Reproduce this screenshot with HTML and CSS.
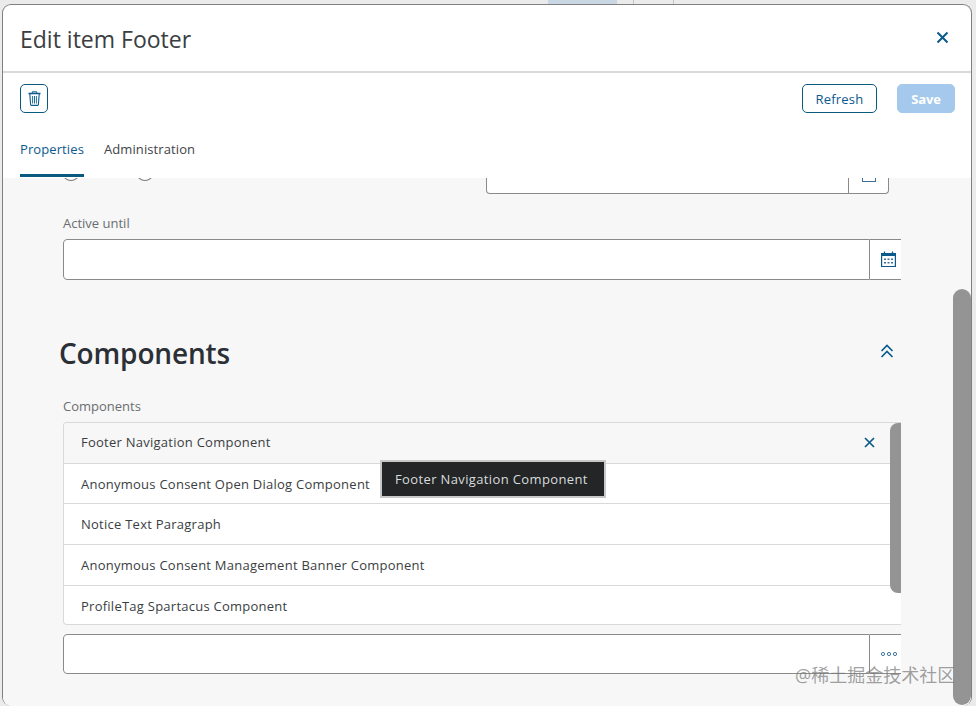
FILE: index.html
```html
<!DOCTYPE html>
<html lang="en">
<head>
<meta charset="utf-8">
<title>Edit item Footer</title>
<link rel="stylesheet" href="styles.css">
</head>
<body>
<div class="backdrop">
  <span class="strip strip-a"></span>
  <span class="strip strip-b"></span>
  <span class="strip strip-c"></span>
</div>
<main class="dialog">
  <header class="dialog-head">
    <h1 class="dialog-title">Edit item Footer</h1>
    <button class="icon-plain close-btn" aria-label="Close">
      <svg width="13" height="13" viewBox="0 0 13 13"><path d="M1.500 1.500l10 10M11.500 1.500l-10 10" class="stroke" stroke-width="2"/></svg>
    </button>
  </header>
  <div class="toolbar">
    <button class="btn btn-icon" aria-label="Delete">
      <svg width="13" height="15" viewBox="0 0 13 15"><path d="M.5 2.500h12" class="stroke" stroke-width="1.600"/><path d="M4.300 2V.8h4.400V2" class="stroke" stroke-width="1"/><path d="M1.800 3l.8 10.500c0 .5.4.9.9.9h6c.5 0 .9-.4.9-.9L11.200 3" class="stroke" stroke-width="1.100"/><path d="M4.600 5v7.500M6.500 5v7.500M8.400 5v7.500" class="stroke" stroke-width=".9"/></svg>
    </button>
    <div class="toolbar-end">
      <button class="btn btn-refresh">Refresh</button>
      <button class="btn btn-save">Save</button>
    </div>
  </div>
  <nav class="tabs">
    <a class="tab tab-active">Properties</a>
    <a class="tab">Administration</a>
  </nav>
  <section class="body">
    <div class="scroll-content">
      <div class="top-row">
        <div class="radios">
          <span class="radio"></span>
          <span class="radio"></span>
        </div>
        <div class="date-clip">
          <span class="date-main"></span>
          <span class="date-side"><span class="cal-stub"></span></span>
        </div>
      </div>
      <label class="field-label label-active">Active until</label>
      <div class="input-row input-tall">
        <span class="input-main"></span>
        <span class="input-side">
          <svg class="cal-icon" width="15" height="16" viewBox="0 0 15 16"><path d="M.6 2.500h13.800v13H.6z" class="stroke" stroke-width="1.200"/><path d="M.6 2h13.800v3H.6z" class="fill"/><path d="M3.500 .5v2M11.500 .5v2" class="stroke" stroke-width="1.300"/><path d="M3 7.500h2V9H3zM6.500 7.500h2V9h-2zM10 7.500h2V9h-2zM3 11h2v1.500H3zM6.500 11h2v1.500h-2zM10 11h2v1.500h-2z" class="fill-soft"/></svg>
        </span>
      </div>
      <div class="section-head">
        <h2 class="section-title">Components</h2>
        <svg class="collapse-icon" width="14" height="14" viewBox="0 0 14 14"><path d="M1.500 7l5.500-5.500L12.500 7M1.500 13l5.500-5.500 5.500 5.500" class="stroke" stroke-width="1.700"/></svg>
      </div>
      <label class="field-label label-comp">Components</label>
      <ul class="list">
        <li class="row row-selected">
          <span>Footer Navigation Component</span>
          <svg class="row-x" width="11" height="11" viewBox="0 0 11 11"><path d="M1 1l9 9M10 1l-9 9" class="stroke" stroke-width="1.700"/></svg>
        </li>
        <li class="row row-2">Anonymous Consent Open Dialog Component</li>
        <li class="row row-3">Notice Text Paragraph</li>
        <li class="row row-4">Anonymous Consent Management Banner Component</li>
        <li class="row row-5">ProfileTag Spartacus Component</li>
        <li class="list-scroll"></li>
      </ul>
      <div class="input-row input-short">
        <span class="input-main"></span>
        <span class="input-side">
          <svg width="16" height="4" viewBox="0 0 16 4"><circle cx="2" cy="2" r="1.600" class="ring"/><circle cx="8" cy="2" r="1.600" class="ring"/><circle cx="14" cy="2" r="1.600" class="ring"/></svg>
        </span>
      </div>
    </div>
    <div class="tooltip">Footer Navigation Component</div>
    <span class="page-scroll"></span>
  </section>
</main>
<div class="watermark">@稀土掘金技术社区</div>
</body>
</html>
```
FILE: styles.css
```css
* { box-sizing: border-box; }
html, body { margin: 0; height: 100%; }
body {
  position: relative;
  width: 976px;
  height: 706px;
  overflow: hidden;
  padding: 4px 4px 0 2px;
  background: #ebebeb;
  font-family: "Open Sans", "Liberation Sans", sans-serif;
  color: #32363a;
}
.backdrop { position: absolute; inset: 0 0 auto 0; height: 4px; }
.strip { position: absolute; top: 0; height: 4px; }
.strip-a { left: 548px; width: 69px; background: #c9d6e4; }
.strip-b { left: 633px; width: 1px; background: #c4c4c4; }
.strip-c { left: 673px; width: 1px; background: #c4c4c4; }

.dialog {
  position: relative;
  height: 702px;
  display: flex;
  flex-direction: column;
  background: #fff;
  border: 1px solid #7f7f7f;
  border-bottom: 0;
  border-radius: 9px;
  overflow: hidden;
}
.stroke { fill: none; stroke: #0a5a8c; }
.fill { fill: #0a5a8c; }
.fill-soft { fill: #3f6f94; }
.ring { fill: none; stroke: #2f6a94; stroke-width: 0.900; }

.dialog-head {
  height: 68px;
  flex: none;
  padding: 0 22px 0 17px;
  display: flex;
  align-items: center;
  justify-content: space-between;
  border-bottom: 2px solid #d9d9d9;
}
.dialog-title { margin: 2px 0 0; font-size: 23px; font-weight: 400; color: #3a3e42; }
.icon-plain { border: 0; background: none; padding: 0; display: flex; margin-top: -1px; }

.toolbar {
  height: 29px;
  margin-top: 11px;
  flex: none;
  padding: 0 16px 0 17px;
  display: flex;
  justify-content: space-between;
}
.toolbar-end { display: flex; gap: 20px; }
.btn {
  height: 29px;
  border-radius: 5px;
  font: 400 13px "Open Sans", "Liberation Sans", sans-serif;
  letter-spacing: 0.2px;
  display: flex;
  align-items: center;
  justify-content: center;
  padding: 0;
  background: #fff;
  border: 1px solid #0a5a7f;
  color: #0a5a8c;
}
.btn-icon { width: 28px; }
.btn-refresh { width: 75px; }
.btn-save { width: 58px; background: #a4c9ec; border-color: #a4c9ec; color: #fff; font-weight: 700; letter-spacing: -0.1px; }

.tabs { flex: none; height: 65px; padding: 0 17px; display: flex; gap: 20px; }
.tab { height: 64px; padding-top: 27px; line-height: 18px; font-size: 13px; letter-spacing: 0.1px; color: #3f4347; border-bottom: 3px solid transparent; }
.tab-active { color: #0a5a8c; border-bottom-color: #0a5a7f; }

.body { position: relative; flex: 1; min-height: 0; background: #f7f7f7; overflow: hidden; }
.scroll-content { width: 898px; padding-left: 60px; overflow: hidden; height: 100%; }

.top-row { height: 15px; position: relative; display: flex; justify-content: space-between; }
.radios { display: flex; gap: 58px; margin-top: -11px; height: 14px; overflow: hidden; }
.radio { width: 16px; height: 14px; border: 1px solid #7a7a7a; border-radius: 50%; background: #fff; }
.date-clip { display: flex; width: 403px; height: 16px; margin-right: 12px; }
.date-main { flex: 1; background: #fff; border: 1px solid #8a8a8a; border-top: 0; border-radius: 0 0 0 4px; }
.date-side { width: 40px; background: #fff; border: 1px solid #8a8a8a; border-top: 0; border-left: 0; border-radius: 0 0 4px 0; display: flex; justify-content: center; }
.cal-stub { width: 14px; height: 4px; border: 1px solid #3f6f94; border-top: 0; }

.field-label { display: block; font-size: 13px; color: #6a6d70; }
.label-active { margin-top: 21px; line-height: 18px; height: 25px; }
.label-comp { margin-top: 24px; line-height: 18px; height: 25px; }

.input-row { display: flex; width: 838px; margin: 0; background: #fff; }
.input-tall { height: 41px; }
.input-short { height: 40px; margin-top: 9px; }
.input-main { flex: 1; border: 1px solid #8a8a8a; border-radius: 4px 0 0 4px; }
.input-side { width: 31px; flex: none; border-top: 1px solid #8a8a8a; border-bottom: 1px solid #8a8a8a; display: flex; align-items: center; padding-left: 11px; }
.cal-icon { margin-top: -1px; }

.section-head { display: flex; justify-content: space-between; align-items: center; width: 835px; margin: 53px 0 0 -4px; height: 40px; }
.section-title { margin: 0; font-size: 28px; font-weight: 600; color: #2b2f36; letter-spacing: -0.15px; }
.collapse-icon { margin-top: -5px; }

.list { position: relative; margin: 0; padding: 0; width: 838px; height: 203px; list-style: none; background: #fff; border: 1px solid #d9d9d9; border-right: 0; border-radius: 4px 0 0 4px; overflow: hidden; font-size: 13px; letter-spacing: 0.25px; }
.row { height: 41px; padding: 0 26px 0 17px; display: flex; align-items: center; justify-content: space-between; border-bottom: 1px solid #d9d9d9; color: #3a3e42; }
.row-2 { height: 40px; }
.row-selected { height: 41px; padding-bottom: 2px; background: #f7f7f7; }
.row-5 { border-bottom: 0; height: 39px; }
.list-scroll { position: absolute; right: 0; top: 0; width: 11px; height: 170px; background: #949494; border-radius: 8px 0 0 8px; }

.tooltip { position: absolute; left: 377px; top: 282px; width: 226px; height: 38px; background: #232527; border: 2px solid #c8c8c8; color: #d8dcdc; font-size: 13px; letter-spacing: 0.37px; line-height: 34px; padding-left: 13px; }
.page-scroll { position: absolute; right: 0; top: 111px; width: 18px; bottom: 1px; background: #949494; border-radius: 9px; }

.watermark { position: absolute; left: 795px; top: 664px; font-size: 18px; line-height: 22px; color: rgba(120,120,120,0.7); font-family: "Open Sans", "Noto Sans CJK SC", sans-serif; white-space: nowrap; }
```
